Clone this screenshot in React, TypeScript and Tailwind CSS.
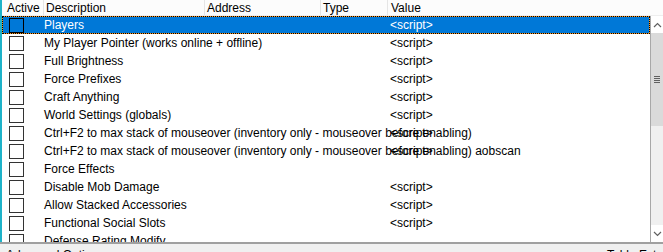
const rows: { text: string; value?: string }[] = [
  { text: "Players", value: "<script>" },
  { text: "My Player Pointer (works online + offline)", value: "<script>" },
  { text: "Full Brightness", value: "<script>" },
  { text: "Force Prefixes", value: "<script>" },
  { text: "Craft Anything", value: "<script>" },
  { text: "World Settings (globals)", value: "<script>" },
  { text: "Ctrl+F2 to max stack of mouseover (inventory only - mouseover before enabling)", value: "<script>" },
  { text: "Ctrl+F2 to max stack of mouseover (inventory only - mouseover before enabling) aobscan", value: "<script>" },
  { text: "Force Effects" },
  { text: "Disable Mob Damage", value: "<script>" },
  { text: "Allow Stacked Accessories", value: "<script>" },
  { text: "Functional Social Slots", value: "<script>" },
  { text: "Defense Rating Modify" },
];

const Row = ({ text, value, selected }: { text: string; value?: string; selected?: boolean }) => {
  const inner = (
    <div
      className={`relative h-full w-full flex items-center ${
        selected ? "bg-[#0078d7] text-white" : "text-black"
      }`}
    >
      <div
        className={`w-[15px] h-[15px] shrink-0 border ${
          selected ? "ml-[6px] border-black" : "ml-[7px] border-[#333333] bg-white"
        }`}
      />
      <span className={`absolute whitespace-nowrap ${selected ? "left-[41px]" : "left-[42px]"}`}>
        {text}
      </span>
      {value && (
        <span className={`absolute whitespace-nowrap ${selected ? "left-[387px]" : "left-[388px]"}`}>
          {value}
        </span>
      )}
    </div>
  );
  if (selected) {
    return (
      <div className="h-[18px] bg-[#f7931e] border border-dotted border-black">{inner}</div>
    );
  }
  return <div className="h-[18px]">{inner}</div>;
};

const App = () => {
  return (
    <div
      className="w-[663px] h-[252px] overflow-hidden flex flex-col bg-white text-[12px] leading-none"
      style={{ fontFamily: '"Liberation Sans", Arial, sans-serif' }}
    >
      <div className="h-[242px] flex">
        <div className="w-[2px] bg-[#1fb3c9] shrink-0" />
        <div className="flex-1 flex flex-col min-w-0">
          {/* header */}
          <div className="h-[16px] grid grid-cols-[42px_161px_116px_67px_1fr] bg-[#fcfcfc] border-b border-[#eeeeee] text-black">
            <div className="pl-[5px] flex items-center border-r border-[#e5e5e5]">Active</div>
            <div className="pl-[2px] flex items-center border-r border-[#e5e5e5]">Description</div>
            <div className="pl-[2px] flex items-center border-r border-[#e5e5e5]">Address</div>
            <div className="pl-[2px] flex items-center border-r border-[#e5e5e5]">Type</div>
            <div className="pl-[3px] flex items-center">Value</div>
          </div>
          <div className="flex-1 flex min-h-0">
            <div className="flex-1 overflow-hidden">
              {rows.map((r, i) => (
                <Row key={i} text={r.text} value={r.value} selected={i === 0} />
              ))}
            </div>
            {/* scrollbar */}
            <div className="w-[13px] shrink-0 flex flex-col bg-[#f0f0f0] border-l border-[#a8a8a8]">
              <div className="h-[17px] bg-white flex items-center justify-center">
                <svg width="9" height="6" viewBox="0 0 9 6">
                  <path d="M1 5 L4.5 1.5 L8 5" stroke="#606060" strokeWidth="1.2" fill="none" />
                </svg>
              </div>
              <div className="h-[93px] bg-[#dadada] flex items-center justify-center">
                <div className="flex flex-col gap-[1px]">
                  <div className="w-[6px] h-[1px] bg-[#606060]" />
                  <div className="w-[6px] h-[1px] bg-[#606060]" />
                  <div className="w-[6px] h-[1px] bg-[#606060]" />
                  <div className="w-[6px] h-[1px] bg-[#606060]" />
                </div>
              </div>
              <div className="flex-1" />
              <div className="h-[17px] bg-white flex items-center justify-center">
                <svg width="9" height="6" viewBox="0 0 9 6">
                  <path d="M1 1 L4.5 4.5 L8 1" stroke="#606060" strokeWidth="1.2" fill="none" />
                </svg>
              </div>
            </div>
          </div>
        </div>
      </div>
      <div className="flex-1 bg-[#f0f0f0] border-t-2 border-[#a0a0a0] flex justify-between items-start px-[6px] pt-[5px] text-black">
        <span>Advanced Options</span>
        <span className="mr-[-16px]">Table Extras</span>
      </div>
    </div>
  );
};

export default App;
